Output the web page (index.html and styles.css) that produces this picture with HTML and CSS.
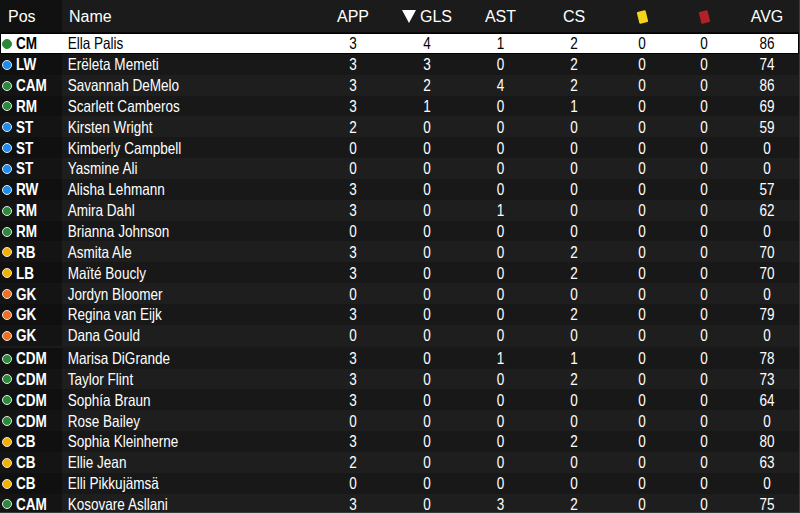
FILE: index.html
```html
<!DOCTYPE html>
<html>
<head>
<meta charset="utf-8">
<link rel="stylesheet" href="styles.css">
</head>
<body>
<div class="table">
  <div class="row head">
    <div class="c pos">Pos</div>
    <div class="c name">Name</div>
    <div class="c num">APP</div>
    <div class="c num"><svg class="sort" width="14" height="13" viewBox="0 0 14 13"><polygon points="0,0 14,0 7,13" fill="#fff"/></svg>GLS</div>
    <div class="c num">AST</div>
    <div class="c num">CS</div>
    <div class="c num"><span class="card yellow"></span></div>
    <div class="c num"><span class="card red"></span></div>
    <div class="c num">AVG</div>
  </div>
  <div class="body">
    <div class="row sel"><div class="c pos"><span class="dot mid"></span><span class="t">CM</span></div><div class="c name">Ella Palis</div><div class="c num">3</div><div class="c num">4</div><div class="c num">1</div><div class="c num">2</div><div class="c num">0</div><div class="c num">0</div><div class="c num">86</div></div>
    <div class="row"><div class="c pos"><span class="dot fwd"></span><span class="t">LW</span></div><div class="c name">Erëleta Memeti</div><div class="c num">3</div><div class="c num">3</div><div class="c num">0</div><div class="c num">2</div><div class="c num">0</div><div class="c num">0</div><div class="c num">74</div></div>
    <div class="row"><div class="c pos"><span class="dot mid"></span><span class="t">CAM</span></div><div class="c name">Savannah DeMelo</div><div class="c num">3</div><div class="c num">2</div><div class="c num">4</div><div class="c num">2</div><div class="c num">0</div><div class="c num">0</div><div class="c num">86</div></div>
    <div class="row"><div class="c pos"><span class="dot mid"></span><span class="t">RM</span></div><div class="c name">Scarlett Camberos</div><div class="c num">3</div><div class="c num">1</div><div class="c num">0</div><div class="c num">1</div><div class="c num">0</div><div class="c num">0</div><div class="c num">69</div></div>
    <div class="row"><div class="c pos"><span class="dot fwd"></span><span class="t">ST</span></div><div class="c name">Kirsten Wright</div><div class="c num">2</div><div class="c num">0</div><div class="c num">0</div><div class="c num">0</div><div class="c num">0</div><div class="c num">0</div><div class="c num">59</div></div>
    <div class="row"><div class="c pos"><span class="dot fwd"></span><span class="t">ST</span></div><div class="c name">Kimberly Campbell</div><div class="c num">0</div><div class="c num">0</div><div class="c num">0</div><div class="c num">0</div><div class="c num">0</div><div class="c num">0</div><div class="c num">0</div></div>
    <div class="row"><div class="c pos"><span class="dot fwd"></span><span class="t">ST</span></div><div class="c name">Yasmine Ali</div><div class="c num">0</div><div class="c num">0</div><div class="c num">0</div><div class="c num">0</div><div class="c num">0</div><div class="c num">0</div><div class="c num">0</div></div>
    <div class="row"><div class="c pos"><span class="dot fwd"></span><span class="t">RW</span></div><div class="c name">Alisha Lehmann</div><div class="c num">3</div><div class="c num">0</div><div class="c num">0</div><div class="c num">0</div><div class="c num">0</div><div class="c num">0</div><div class="c num">57</div></div>
    <div class="row"><div class="c pos"><span class="dot mid"></span><span class="t">RM</span></div><div class="c name">Amira Dahl</div><div class="c num">3</div><div class="c num">0</div><div class="c num">1</div><div class="c num">0</div><div class="c num">0</div><div class="c num">0</div><div class="c num">62</div></div>
    <div class="row"><div class="c pos"><span class="dot mid"></span><span class="t">RM</span></div><div class="c name">Brianna Johnson</div><div class="c num">0</div><div class="c num">0</div><div class="c num">0</div><div class="c num">0</div><div class="c num">0</div><div class="c num">0</div><div class="c num">0</div></div>
    <div class="row"><div class="c pos"><span class="dot def"></span><span class="t">RB</span></div><div class="c name">Asmita Ale</div><div class="c num">3</div><div class="c num">0</div><div class="c num">0</div><div class="c num">2</div><div class="c num">0</div><div class="c num">0</div><div class="c num">70</div></div>
    <div class="row"><div class="c pos"><span class="dot def"></span><span class="t">LB</span></div><div class="c name">Maïté Boucly</div><div class="c num">3</div><div class="c num">0</div><div class="c num">0</div><div class="c num">2</div><div class="c num">0</div><div class="c num">0</div><div class="c num">70</div></div>
    <div class="row"><div class="c pos"><span class="dot gk"></span><span class="t">GK</span></div><div class="c name">Jordyn Bloomer</div><div class="c num">0</div><div class="c num">0</div><div class="c num">0</div><div class="c num">0</div><div class="c num">0</div><div class="c num">0</div><div class="c num">0</div></div>
    <div class="row"><div class="c pos"><span class="dot gk"></span><span class="t">GK</span></div><div class="c name">Regina van Eijk</div><div class="c num">3</div><div class="c num">0</div><div class="c num">0</div><div class="c num">2</div><div class="c num">0</div><div class="c num">0</div><div class="c num">79</div></div>
    <div class="row"><div class="c pos"><span class="dot gk"></span><span class="t">GK</span></div><div class="c name">Dana Gould</div><div class="c num">0</div><div class="c num">0</div><div class="c num">0</div><div class="c num">0</div><div class="c num">0</div><div class="c num">0</div><div class="c num">0</div></div>
    <div class="row gap"><div class="c pos"><span class="dot mid"></span><span class="t">CDM</span></div><div class="c name">Marisa DiGrande</div><div class="c num">3</div><div class="c num">0</div><div class="c num">1</div><div class="c num">1</div><div class="c num">0</div><div class="c num">0</div><div class="c num">78</div></div>
    <div class="row"><div class="c pos"><span class="dot mid"></span><span class="t">CDM</span></div><div class="c name">Taylor Flint</div><div class="c num">3</div><div class="c num">0</div><div class="c num">0</div><div class="c num">2</div><div class="c num">0</div><div class="c num">0</div><div class="c num">73</div></div>
    <div class="row"><div class="c pos"><span class="dot mid"></span><span class="t">CDM</span></div><div class="c name">Sophía Braun</div><div class="c num">3</div><div class="c num">0</div><div class="c num">0</div><div class="c num">0</div><div class="c num">0</div><div class="c num">0</div><div class="c num">64</div></div>
    <div class="row"><div class="c pos"><span class="dot mid"></span><span class="t">CDM</span></div><div class="c name">Rose Bailey</div><div class="c num">0</div><div class="c num">0</div><div class="c num">0</div><div class="c num">0</div><div class="c num">0</div><div class="c num">0</div><div class="c num">0</div></div>
    <div class="row"><div class="c pos"><span class="dot def"></span><span class="t">CB</span></div><div class="c name">Sophia Kleinherne</div><div class="c num">3</div><div class="c num">0</div><div class="c num">0</div><div class="c num">2</div><div class="c num">0</div><div class="c num">0</div><div class="c num">80</div></div>
    <div class="row"><div class="c pos"><span class="dot def"></span><span class="t">CB</span></div><div class="c name">Ellie Jean</div><div class="c num">2</div><div class="c num">0</div><div class="c num">0</div><div class="c num">0</div><div class="c num">0</div><div class="c num">0</div><div class="c num">63</div></div>
    <div class="row"><div class="c pos"><span class="dot def"></span><span class="t">CB</span></div><div class="c name">Elli Pikkujämsä</div><div class="c num">0</div><div class="c num">0</div><div class="c num">0</div><div class="c num">0</div><div class="c num">0</div><div class="c num">0</div><div class="c num">0</div></div>
    <div class="row"><div class="c pos"><span class="dot mid"></span><span class="t">CAM</span></div><div class="c name">Kosovare Asllani</div><div class="c num">3</div><div class="c num">0</div><div class="c num">3</div><div class="c num">2</div><div class="c num">0</div><div class="c num">0</div><div class="c num">75</div></div>
  </div>
</div>
</body>
</html>
```

FILE: styles.css
```css
html, body {
  margin: 0;
  padding: 0;
  background: #1b1b1b;
  overflow: hidden;
}
.table {
  width: 800px;
  height: 513px;
  box-sizing: border-box;
  border-right: 1px solid #3a3a3a;
  border-bottom: 1px solid #3a3a3a;
  background: #1b1b1b;
  overflow: hidden;
  color: #fff;
  font-family: "Liberation Sans", Arial, sans-serif;
}
.row {
  display: grid;
  grid-template-columns: 62px 254px 74px 74px 73px 74px 62px 62px 64px;
  height: 20.85px;
  align-items: center;
  font-size: 16.5px;
}
.body .row:nth-child(odd) { background: #1e1e1e; }
.body .row:nth-child(even) { background: #181818; }
.body .row:nth-child(odd) .pos { background: #141414; }
.body .row:nth-child(even) .pos { background: #101010; }
.row.gap { margin-top: 2px; }
.c {
  height: 100%;
  box-sizing: border-box;
  display: flex;
  align-items: center;
  white-space: nowrap;
}
.body .c { padding-top: 1px; }
.head {
  height: 32px;
  background: #1b1b1b;
  border-bottom: 1px solid #0a0a0a;
  font-size: 16px;
}
.head .c { padding-top: 1px; }
.head .pos { background: #111; padding-left: 8px; font-weight: normal; }
.head .name { padding-left: 7px; transform: none; }
.head .num { transform: none; }
.pos {
  font-weight: bold;
  padding-left: 2px;
}
.pos .t {
  display: inline-block;
  transform: scaleX(0.82);
  transform-origin: left center;
}
.name {
  padding-left: 7px;
  transform: scaleX(0.82);
  transform-origin: left center;
}
.num {
  justify-content: center;
  transform: scaleX(0.82);
}
.sort { margin-right: 4px; }
.dot {
  width: 8px;
  height: 8px;
  border-radius: 50%;
  border: 1px solid #e8e8e8;
  margin-right: 4px;
  flex: none;
}
.dot.mid { background: #2a8a3a; }
.dot.fwd { background: #1d8cf0; }
.dot.def { background: #f4b000; }
.dot.gk { background: #f07022; }
.sel { background: #fff !important; color: #000; box-shadow: inset 0 0 0 1px #000; }
.sel .pos { background: transparent !important; }
.sel .dot { border-color: #2a8a3a; }
.card {
  display: block;
  width: 9px;
  height: 12px;
  transform: rotate(-14deg);
  border-radius: 1px;
}
.card.yellow { background: #f4d31a; }
.card.red { background: #b02226; }
```
